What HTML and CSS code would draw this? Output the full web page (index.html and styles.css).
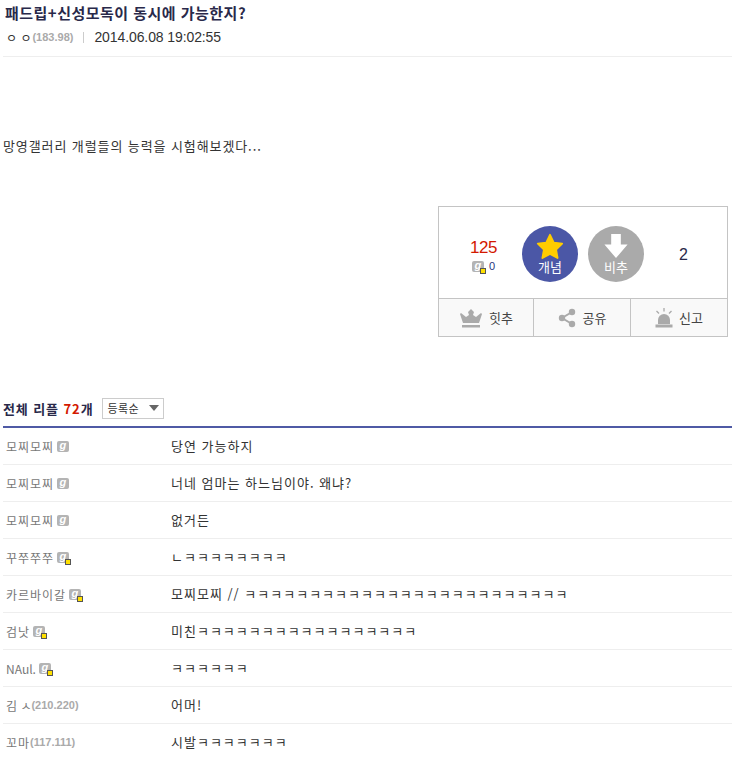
FILE: index.html
```html
<!DOCTYPE html>
<html lang="ko">
<head>
<meta charset="utf-8">
<title>패드립+신성모독이 동시에 가능한지?</title>
<link rel="stylesheet" href="styles.css">
</head>
<body>
<div class="page">
  <header class="post-head">
    <h1 class="post-title">패드립+신성모독이 동시에 가능한지?</h1>
    <div class="post-meta">
      <span class="author">ㅇ ㅇ</span><span class="ip">(183.98)</span>
      <span class="sep"></span>
      <span class="date">2014.06.08 19:02:55</span>
    </div>
  </header>
  <p class="post-body">망영갤러리 개럴들의 능력을 시험해보겠다...</p>
  <section class="vote-box">
    <div class="vote-top">
      <div class="score">
        <div class="score-num">125</div>
        <div class="score-sub"><span class="badge"><i>g</i><b class="pin"></b></span><span class="score-fix">0</span></div>
      </div>
      <button class="round up">
        <svg class="round-icon" width="28" height="27" viewBox="0 0 30 28"><path d="M15 1.500l4 8.300 9 1.200-6.500 6.300 1.600 9-8.100-4.300-8.100 4.300 1.600-9L2 11l9-1.200z" fill="#ffcc00" stroke="#ffcc00" stroke-width="2" stroke-linejoin="round"/></svg>
        <span>개념</span>
      </button>
      <button class="round down">
        <svg class="round-icon" width="26" height="27" viewBox="0 0 26 28"><path d="M8 1h10v11h7L13 26 1 12h7z" fill="#fff"/></svg>
        <span>비추</span>
      </button>
      <div class="down-num">2</div>
    </div>
    <div class="vote-bottom">
      <a class="vote-act act-hit">
        <svg width="24" height="20" viewBox="0 0 24 20"><path d="M12 1l3 3-1 3 3 2 5-4 1 1-3 9H4L1 6l1-1 5 4 3-2-1-3z" fill="#aaa"/><rect x="3" y="17" width="18" height="2.500" fill="#aaa"/></svg>
        <span>힛추</span>
      </a>
      <a class="vote-act act-share">
        <svg width="18" height="20" viewBox="0 0 18 20"><path d="M14 4L4 10l10 6" fill="none" stroke="#aaa" stroke-width="2"/><circle cx="14" cy="4" r="3.200" fill="#aaa"/><circle cx="4" cy="10" r="3.200" fill="#aaa"/><circle cx="14" cy="16" r="3.200" fill="#aaa"/></svg>
        <span>공유</span>
      </a>
      <a class="vote-act act-report">
        <svg width="18" height="20" viewBox="0 0 18 20"><path d="M3 16v-4a6 6 0 0 1 12 0v4z" fill="#aaa"/><rect x="0.500" y="16.500" width="17" height="3" fill="#aaa"/><path d="M9 0v3.500M1.500 3l2.500 2.500M16.500 3L14 5.500" stroke="#aaa" stroke-width="1.300"/></svg>
        <span>신고</span>
      </a>
    </div>
  </section>
  <div class="cmt-head">
    <strong class="cmt-title">전체 리플 <em>72</em>개</strong>
    <div class="sort">등록순<span class="caret"></span></div>
  </div>
  <ul class="cmt-list">
    <li class="cmt"><div class="nick">모찌모찌<span class="badge"><i>g</i></span></div><div class="txt">당연 가능하지</div></li>
    <li class="cmt"><div class="nick">모찌모찌<span class="badge"><i>g</i></span></div><div class="txt">너네 엄마는 하느님이야. 왜냐?</div></li>
    <li class="cmt"><div class="nick">모찌모찌<span class="badge"><i>g</i></span></div><div class="txt">없거든</div></li>
    <li class="cmt"><div class="nick">꾸쭈쭈쭈<span class="badge"><i>g</i><b class="pin"></b></span></div><div class="txt">ㄴㅋㅋㅋㅋㅋㅋㅋㅋ</div></li>
    <li class="cmt"><div class="nick">카르바이갈<span class="badge"><i>g</i><b class="pin"></b></span></div><div class="txt">모찌모찌 // ㅋㅋㅋㅋㅋㅋㅋㅋㅋㅋㅋㅋㅋㅋㅋㅋㅋㅋㅋㅋㅋㅋㅋㅋㅋ</div></li>
    <li class="cmt"><div class="nick">검낫<span class="badge"><i>g</i><b class="pin"></b></span></div><div class="txt">미친ㅋㅋㅋㅋㅋㅋㅋㅋㅋㅋㅋㅋㅋㅋㅋㅋㅋ</div></li>
    <li class="cmt"><div class="nick nick-plain">NAul.<span class="badge"><i>g</i><b class="pin"></b></span></div><div class="txt">ㅋㅋㅋㅋㅋㅋ</div></li>
    <li class="cmt"><div class="nick nick-plain">김 ㅅ<span class="ip">(210.220)</span></div><div class="txt">어머!</div></li>
    <li class="cmt"><div class="nick">꼬마<span class="ip">(117.111)</span></div><div class="txt">시발ㅋㅋㅋㅋㅋㅋㅋ</div></li>
  </ul>
</div>
</body>
</html>
```
FILE: styles.css
```css
* { box-sizing: border-box; }
html, body { margin: 0; padding: 0; background: #fff; }
body {
  font-family: "Noto Sans CJK KR", "Noto Sans", "Liberation Sans", sans-serif;
  font-size: 13px;
  color: #333;
  overflow: hidden;
  height: 758px;
}
.page { padding-left: 3px; }
.post-head { height: 57px; border-bottom: 1px solid #eee; padding: 3px 0 0 2px; }
.post-title { margin: 0; font-size: 15px; line-height: 20px; font-weight: 700; color: #29294a; letter-spacing: .48px; }
.post-meta { display: flex; align-items: center; height: 20px; margin-top: 4px; font-size: 12px; padding-left: 1px; }
.author { color: #333; }
.ip { font-family: "Liberation Sans", sans-serif; font-weight: 700; font-size: 11px; color: #aaa; margin-left: 1px; }
.sep { width: 1px; height: 11px; background: #ccc; margin: 0 10px; }
.date { color: #333; font-size: 14px; letter-spacing: -.1px; font-family: "Liberation Sans", sans-serif; }
.post-body { margin: 0; padding-top: 79px; height: 149px; line-height: 20px; font-size: 13px; letter-spacing: .9px; }
.vote-box {
  width: 290px; height: 131px; margin-left: 435px;
  border: 1px solid #c4c4c4;
  display: flex; flex-direction: column;
}
.vote-top { height: 92px; display: flex; align-items: center; padding-top: 2px; border-bottom: 1px solid #c4c4c4; }
.score { width: 83px; padding: 3px 0 0 6px; text-align: center; }
.score-num { font-family: "Liberation Sans", sans-serif; font-size: 17px; line-height: 20px; letter-spacing: -.4px; color: #d31900; }
.score-sub { display: flex; align-items: center; justify-content: center; gap: 5px; margin-top: 2px; height: 12px; }
.score-sub .badge { margin-left: 0; }
.score-fix { font-family: "Liberation Sans", sans-serif; font-size: 11px; color: #29367c; }
.round {
  width: 56px; height: 56px; border: 0; padding: 7px 0 0; border-radius: 50%;
  display: flex; flex-direction: column; align-items: center;
  color: #fff; font: inherit; font-size: 13px; line-height: 15px;
}
.round-icon { display: block; margin-bottom: -1px; }
.up { background: #4b57a6; }
.down { background: #aaa; margin-left: 10px; }
.down-num { flex: 1; padding: 2px 4px 0 0; text-align: center; font-family: "Liberation Sans", sans-serif; font-size: 16px; color: #29294a; }
.vote-bottom { flex: 1; display: flex; background: #f9f9f9; }
.vote-act { display: flex; align-items: center; justify-content: center; gap: 6px; font-size: 13px; color: #444; }
.act-hit { width: 95px; border-right: 1px solid #c4c4c4; }
.act-share { width: 97px; border-right: 1px solid #c4c4c4; gap: 7px; }
.act-report { flex: 1; }
.cmt-head { display: flex; align-items: center; margin-top: 60px; height: 22px; }
.cmt-title { font-size: 13px; font-weight: 700; color: #29294a; letter-spacing: .9px; }
.cmt-title em { font-style: normal; color: #d31900; }
.sort {
  width: 62px; height: 21px; margin-left: 8px; border: 1px solid #ccc;
  display: flex; align-items: center; justify-content: space-between;
  padding: 0 2px 0 5px; font-size: 11px; color: #333; letter-spacing: .3px;
}
.caret { width: 0; height: 0; border: 5px solid transparent; border-top: 6px solid #666; border-bottom: 0; margin-right: 2px; }
.cmt-list { list-style: none; margin: 7px 0 0; padding: 0; border-top: 2px solid #4f5aa5; }
.cmt { height: 37px; display: flex; align-items: center; border-bottom: 1px solid #eee; padding-bottom: 1px; }
.nick { width: 168px; padding: 1px 0 0 3px; display: flex; align-items: center; color: #777; font-size: 12px; letter-spacing: .95px; }
.nick-plain { letter-spacing: 0; }
.cmt .ip { margin-left: 0; letter-spacing: 0; }
.txt { font-size: 13px; color: #333; letter-spacing: 1px; white-space: nowrap; }
.badge {
  position: relative; display: inline-block; width: 12px; height: 11px; margin-left: 3px;
  background: #b4b4b4; border-radius: 2px; text-align: center; color: #fff; letter-spacing: 0;
}
.badge i { display: block; font: italic 700 11px/9px "Liberation Sans", sans-serif; }
.pin { position: absolute; right: -2px; bottom: -2px; width: 6px; height: 6px; background: #ffe000; border: 1px solid #555; }
```
